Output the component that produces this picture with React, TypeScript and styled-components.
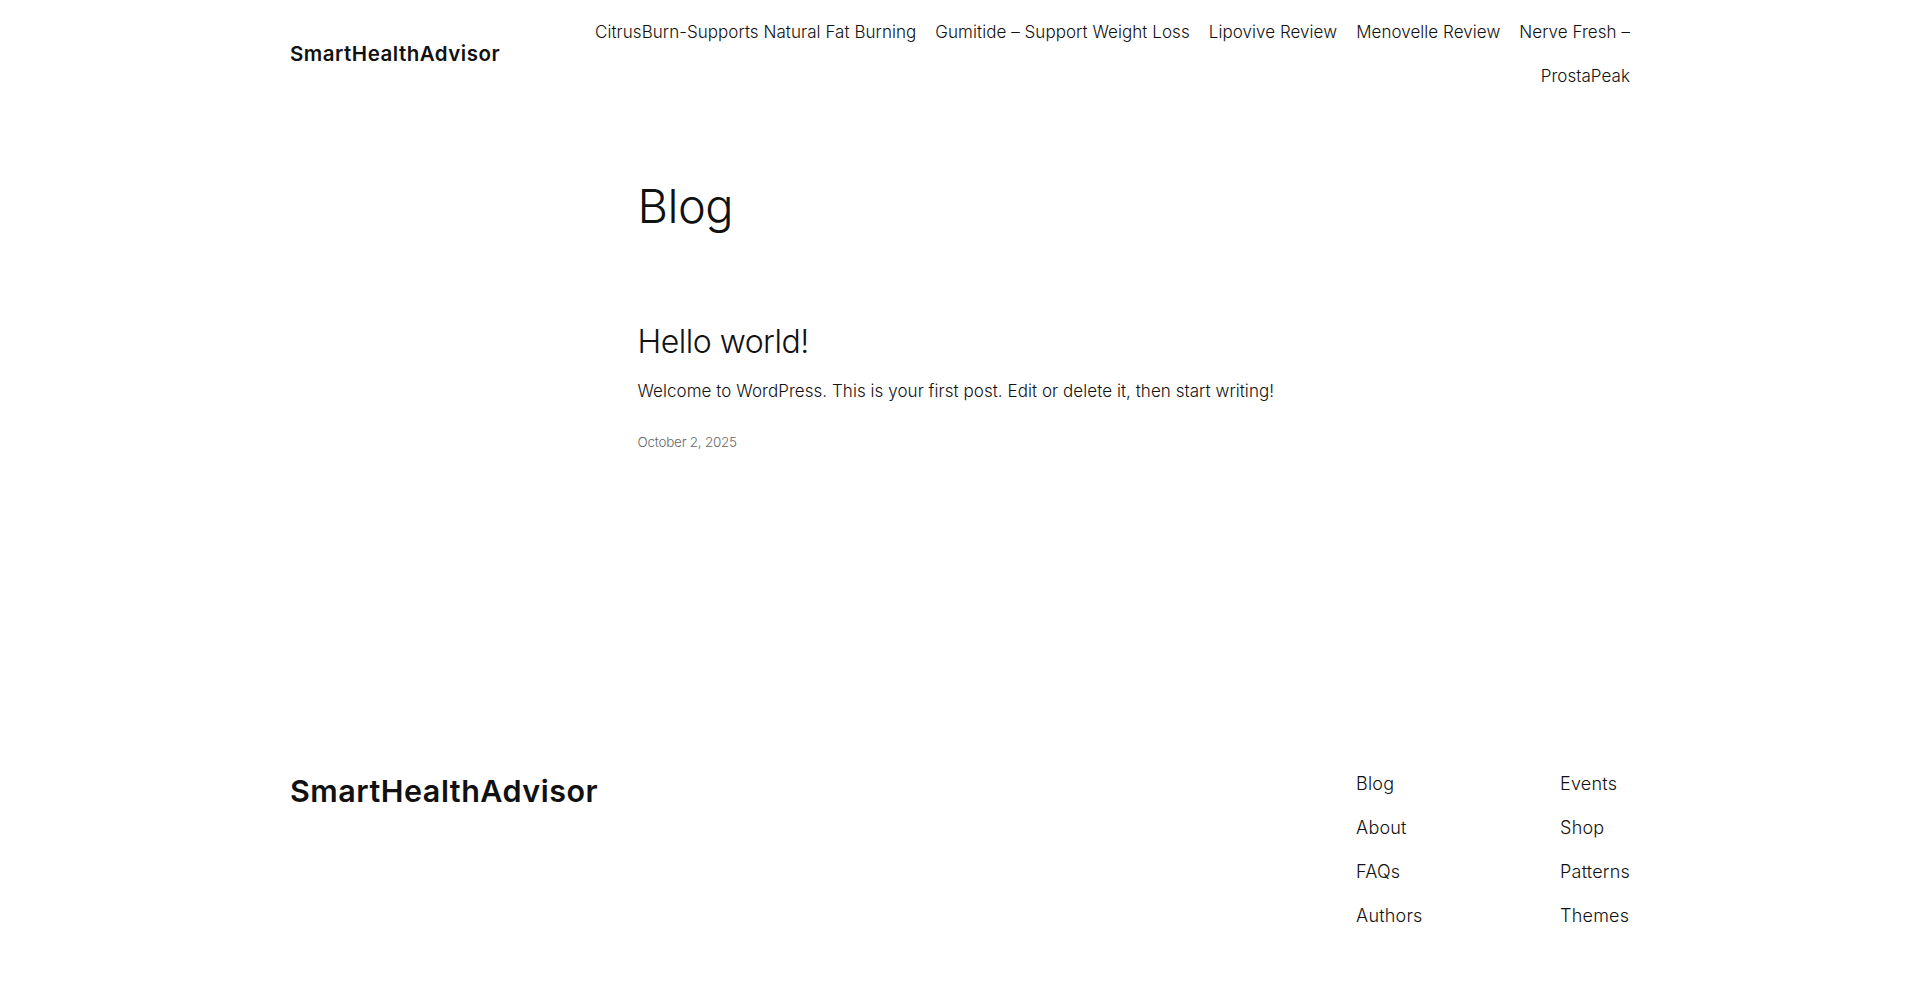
import styled, { createGlobalStyle } from "styled-components";

const GlobalStyle = createGlobalStyle`
  * {
    box-sizing: border-box;
  }
  body {
    margin: 0;
    background: #ffffff;
    color: #111111;
    font-family: Inter, "Noto Sans", "Liberation Sans", sans-serif;
    font-weight: 300;
    -webkit-font-smoothing: antialiased;
  }
  a {
    color: inherit;
    text-decoration: none;
  }
`;

const headerLinks = [
  "CitrusBurn-Supports Natural Fat Burning",
  "Gumitide – Support Weight Loss",
  "Lipovive Review",
  "Menovelle Review",
  "Nerve Fresh –",
  "ProstaPeak",
];

const footerColumns = [
  ["Blog", "About", "FAQs", "Authors"],
  ["Events", "Shop", "Patterns", "Themes"],
];

export default function App() {
  return (
    <>
      <GlobalStyle />
      <Page>
        <Header>
          <SiteTitle href="#">SmartHealthAdvisor</SiteTitle>
          <Nav>
            {headerLinks.map((label) => (
              <NavLink key={label} href="#">
                {label}
              </NavLink>
            ))}
          </Nav>
        </Header>

        <Main>
          <PageTitle>Blog</PageTitle>
          <Post>
            <PostTitle>
              <a href="#">Hello world!</a>
            </PostTitle>
            <Excerpt>
              Welcome to WordPress. This is your first post. Edit or delete it,
              then start writing!
            </Excerpt>
            <PostDate>October 2, 2025</PostDate>
          </Post>
        </Main>

        <Footer>
          <FooterTitle href="#">SmartHealthAdvisor</FooterTitle>
          <FooterNav>
            {footerColumns.map((col, i) => (
              <FooterColumn key={i}>
                {col.map((label) => (
                  <FooterLink key={label} href="#">
                    {label}
                  </FooterLink>
                ))}
              </FooterColumn>
            ))}
          </FooterNav>
        </Footer>
      </Page>
    </>
  );
}

const Page = styled.div`
  min-height: 100vh;
  display: flex;
  flex-direction: column;
`;

const Header = styled.header`
  width: 1340px;
  margin: 0 auto;
  padding: 19px 0;
  display: flex;
  align-items: center;
  justify-content: space-between;
  gap: 40px;
`;

const SiteTitle = styled.a`
  font-size: 20.5px;
  font-weight: 600;
  letter-spacing: 0.5px;
  line-height: 1.3;
  white-space: nowrap;
`;

const Nav = styled.nav`
  flex: 0 1 1080px;
  display: flex;
  flex-wrap: wrap;
  justify-content: flex-end;
  column-gap: 19px;
  row-gap: 18px;
`;

const NavLink = styled.a`
  font-size: 17px;
  line-height: 26px;
  letter-spacing: 0.05px;
  white-space: nowrap;
`;

const Main = styled.main`
  width: 645px;
  margin: 0 auto;
  padding-top: 71px;
`;

const PageTitle = styled.h1`
  margin: 0;
  font-size: 47px;
  font-weight: 300;
  line-height: 54px;
  letter-spacing: -0.5px;
`;

const Post = styled.article`
  margin-top: 90px;
`;

const PostTitle = styled.h2`
  margin: 0;
  font-size: 32px;
  font-weight: 300;
  line-height: 38px;
  letter-spacing: -0.5px;
`;

const Excerpt = styled.p`
  margin: 17px 0 0;
  font-size: 17px;
  line-height: 27px;
  letter-spacing: 0.05px;
`;

const PostDate = styled.time`
  display: block;
  margin-top: 27px;
  font-size: 13.5px;
  line-height: 20px;
  color: #686868;
  letter-spacing: -0.25px;
`;

const Footer = styled.footer`
  width: 1340px;
  margin: 319px auto 0;
  padding-bottom: 64px;
  display: flex;
  justify-content: space-between;
  align-items: flex-start;
`;

const FooterTitle = styled.a`
  margin-top: 2px;
  font-size: 30.5px;
  font-weight: 600;
  line-height: 36px;
  letter-spacing: 0.5px;
`;

const FooterNav = styled.nav`
  display: grid;
  grid-template-columns: 204px auto;
`;

const FooterColumn = styled.div`
  display: flex;
  flex-direction: column;
  gap: 18px;
`;

const FooterLink = styled.a`
  font-size: 18px;
  line-height: 26px;
  letter-spacing: 0.2px;
`;
